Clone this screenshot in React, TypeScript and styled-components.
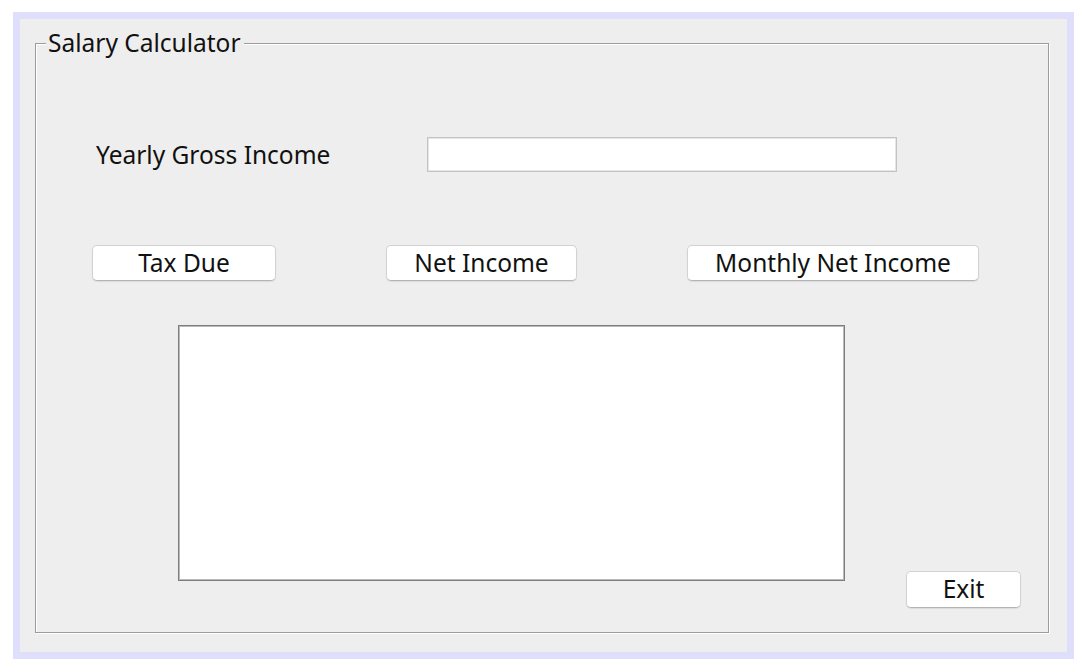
import React from "react";
import styled, { createGlobalStyle } from "styled-components";

const GlobalStyle = createGlobalStyle`
  html, body { margin: 0; padding: 0; background: #ffffff; }
  body { font-family: "Noto Sans", "DejaVu Sans", sans-serif; }
  * { box-sizing: border-box; }
`;

const Frame = styled.div`
  margin: 12px 0 0 13px;
  width: 1061px;
  height: 647px;
  border: 7px solid #dfdffb;
  background: #eeeeee;
  padding: 10px 18px 19px 15px;
  display: flex;
`;

const Group = styled.fieldset`
  flex: 1;
  margin: 0;
  padding: 0;
  min-width: 0;
  border: 1px solid #9c9c9c;
  box-shadow: 1px 1px 0 #ffffff, inset 1px 1px 0 #ffffff;
  display: flex;
  flex-direction: column;
`;

const Title = styled.legend`
  margin-left: 10px;
  padding: 0 3px 0 2px;
  font-size: 24.5px;
  line-height: 28px;
  height: 28px;
  color: #111111;
  background: #eeeeee;
`;

const FieldRow = styled.div`
  display: flex;
  align-items: center;
  margin-top: 80px;
  padding-left: 60px;
`;

const Label = styled.label`
  width: 331px;
  font-size: 24.5px;
  line-height: 1;
  color: #111111;
  padding-top: 2px;
`;

const TextField = styled.input`
  width: 470px;
  height: 35px;
  margin: 0;
  padding: 0 6px;
  border: 1px solid #c3c3c3;
  box-shadow: inset 0 0 0 1px #e6e6e6;
  background: #ffffff;
  font: inherit;
  font-size: 20px;
  outline: none;
`;

const ButtonRow = styled.div`
  display: flex;
  gap: 110px;
  margin-top: 73px;
  padding-left: 56px;
`;

const Button = styled.button<{ $w: number }>`
  width: ${(p) => p.$w}px;
  height: 36px;
  margin: 0;
  padding: 0;
  background: #ffffff;
  border: 1px solid #d2d2d2;
  border-bottom-color: #b4b4b4;
  border-radius: 5px;
  box-shadow: 0 1px 1px rgba(0, 0, 0, 0.08);
  font-family: "Noto Sans", "DejaVu Sans", sans-serif;
  font-size: 24.5px;
  line-height: 1;
  color: #111111;
  display: flex;
  align-items: center;
  justify-content: center;
  cursor: pointer;
`;

const OutputRow = styled.div`
  display: flex;
  align-items: flex-start;
  gap: 61px;
  margin-top: 44px;
  padding-left: 142px;
`;

const Output = styled.textarea`
  width: 667px;
  height: 256px;
  margin: 0;
  padding: 4px;
  border: 1px solid #7e7e7e;
  box-shadow: inset 0 0 0 1px #b9b9b9;
  background: #ffffff;
  resize: none;
  outline: none;
  font: inherit;
  font-size: 18px;
`;

const ExitButton = styled(Button)`
  margin-top: 246px;
  height: 37px;
`;

export default function App() {
  return (
    <>
      <GlobalStyle />
      <Frame>
        <Group>
          <Title>Salary Calculator</Title>
          <FieldRow>
            <Label htmlFor="gross">Yearly Gross Income</Label>
            <TextField id="gross" type="text" />
          </FieldRow>
          <ButtonRow>
            <Button $w={184}>Tax Due</Button>
            <Button $w={191}>Net Income</Button>
            <Button $w={292}>Monthly Net Income</Button>
          </ButtonRow>
          <OutputRow>
            <Output readOnly />
            <ExitButton $w={115}>Exit</ExitButton>
          </OutputRow>
        </Group>
      </Frame>
    </>
  );
}
